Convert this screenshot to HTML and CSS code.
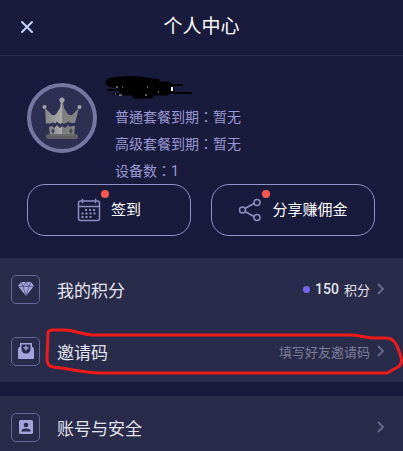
FILE: index.html
```html
<!DOCTYPE html>
<html lang="zh-CN">
<head>
    <meta charset="UTF-8">
    <meta name="viewport" content="width=device-width, initial-scale=1.0">
    <link rel="stylesheet" href="styles.css">
    <title>个人中心</title>
</head>
<body>

    <header class="header">
        <button type="button" class="close" aria-label="关闭">
            <svg width="14" height="14" viewBox="0 0 14 14"><path d="M2 2l10 10M12 2L2 12"/></svg>
        </button>
        <h1 class="title">个人中心</h1>
    </header>

    <section class="profile">
        <div class="avatar">
            <svg width="42" height="44" viewBox="0 0 42 44">
                <defs>
                    <linearGradient id="metal" x1="0" x2="1" y1="0" y2="0">
                        <stop offset="0" stop-color="#85868a"/>
                        <stop offset="0.49" stop-color="#a9aaa8"/>
                        <stop offset="0.52" stop-color="#7d7e80"/>
                        <stop offset="1" stop-color="#858688"/>
                    </linearGradient>
                </defs>
                <g fill="url(#metal)">
                    <path d="M4 12l7 7q4 1 6-4l2-3 1-6h2l1 6 2 3q2 5 6 4l7-7-4 15-3 1-2-2-2 3-3-2-3 3-3-3-3 2-3-3-2 3-3-2-2 1z"/>
                    <path d="M8 31l3-1 2 2 3-3 3 3 2-2 3 2 3-3 2 2 2-1 3 0-1 9H9z"/>
                </g>
                <g fill="#a3a4a6">
                    <circle cx="21" cy="4" r="2.6"/>
                    <circle cx="3.500" cy="11" r="2"/>
                    <circle cx="38.500" cy="11" r="2"/>
                </g>
                <path d="M8 29l3-1 2 2 3-3 3 3 2-2 3 2 3-3 2 2 2-1h3" fill="none" stroke="#2d3052" stroke-width="2"/>
                <path d="M12 32l2 3-2 3-2-3zM30 32l2 3-2 3-2-3z" fill="#4b4c57"/>
                <rect x="5" y="38" width="32" height="5" rx="2" fill="#5f6062"/>
                <path d="M9 39h24" stroke="#777873" stroke-width="1"/>
            </svg>
        </div>
        <div class="info">
            <!-- hidden nickname -->
            <svg class="nickname" width="88" height="24" viewBox="0 0 88 24">
                <g fill="none" stroke="#000" stroke-linecap="round" stroke-linejoin="round">
                    <path d="M4 5q-5 3 6 5M5 4q20-4 40 0" stroke-width="4"/>
                    <path d="M7 5h45M10 8h54M14 11h52M16 14h51M18 17h44M30 20h16" stroke-width="5"/>
                    <path d="M3 14h20M50 9h27M58 17h28M9 18h30" stroke-width="2"/>
                </g>
                <path d="M67 11v4" stroke="#fff" stroke-width="2"/>
                <path d="M11 11h2M17 11h1M42 11h1M10 18h1M14 19h3M40 19h2M53 16h1" stroke="#b9b9c4" stroke-width="1"/>
            </svg>
            <p>普通套餐到期：暂无</p>
            <p>高级套餐到期：暂无</p>
            <p>设备数：1</p>
        </div>
    </section>

    <div class="actions">
        <button type="button" class="action">
            <span class="action-icon">
                <svg width="24" height="24" viewBox="0 0 24 24">
                    <rect x="1.500" y="3" width="21" height="19.500" rx="2"/>
                    <path d="M2 8.500h20M5.500 0.800v4.500M18.500 0.800v4.500"/>
                    <path class="dots" d="M8 12h12M4.500 15.500h15.500M4.500 19h12"/>
                </svg>
                <span class="badge"></span>
            </span>
            签到
        </button>
        <button type="button" class="action">
            <span class="action-icon">
                <svg width="24" height="24" viewBox="0 0 24 24">
                    <path d="M6.800 10.500l9.200-5M6.800 13.500l9.200 5"/>
                    <circle cx="4.500" cy="12" r="3"/>
                    <circle cx="19" cy="4.500" r="3"/>
                    <circle cx="19" cy="19.500" r="3"/>
                </svg>
                <span class="badge"></span>
            </span>
            分享赚佣金
        </button>
    </div>

    <nav class="menu">
        <a href="#" class="row">
            <span class="row-icon">
                <svg width="18" height="16" viewBox="0 0 18 16">
                    <path d="M4 1h10l3 4-8 10L1 5z" fill="#a3a4dc"/>
                    <path d="M1 5.500h16M4 1l2 4.500L9 1l3 4.500L14 1M6 5.500L9 15l3-9.500" fill="none" stroke="#50517f" stroke-width="0.800"/>
                </svg>
            </span>
            <span class="label">我的积分</span>
            <span class="points"><b>150</b> 积分</span>
            <svg class="arrow" width="8" height="14" viewBox="0 0 8 14"><path d="M1 2l5 5-5 5"/></svg>
        </a>
        <a href="#" class="row">
            <span class="row-icon">
                <svg width="18" height="18" viewBox="0 0 18 18">
                    <path d="M3 1h12v4h1l1 2v9q0 1-1 1H2q-1 0-1-1V7l1-2h1z" fill="#a3a4dc"/>
                    <path d="M4.500 2.500h9V7.500Q13 11.500 9 11.500T4.500 7.500z" fill="#292b4d"/>
                    <path d="M9 3l1 1.800 2 .7-1.500 1.500L9 9 7.500 7 6 5.500l2-.7z" fill="#8f90c6"/>
                </svg>
            </span>
            <span class="label">邀请码</span>
            <span class="hint">填写好友邀请码</span>
            <svg class="arrow" width="8" height="14" viewBox="0 0 8 14"><path d="M1 2l5 5-5 5"/></svg>
            <!-- hand-drawn ring around the row -->
            <svg class="ring" viewBox="0 0 403 62" preserveAspectRatio="none">
                <path d="M48 13Q48 10 53 10H65C74 10 80 14 92 15H350C360 15 365 18 376 18H386C395 18 398 27 401 37Q403 44 398 47L387 53H98C82 52 70 49 53 47Q47 46 47 39Z"/>
            </svg>
        </a>
    </nav>

    <nav class="menu">
        <a href="#" class="row">
            <span class="row-icon">
                <svg width="14" height="14" viewBox="0 0 14 14">
                    <rect width="14" height="14" rx="1.500" fill="#a3a4dc"/>
                    <circle cx="7" cy="5" r="2.300" fill="#292b4d"/>
                    <path d="M2.500 11.500V10.500Q3 8.500 7 8.500T11.500 10.500V11.500z" fill="#292b4d"/>
                </svg>
            </span>
            <span class="label">账号与安全</span>
            <svg class="arrow" width="8" height="14" viewBox="0 0 8 14"><path d="M1 2l5 5-5 5"/></svg>
        </a>
    </nav>

</body>
</html>
```

FILE: styles.css
```css
* {
    box-sizing: border-box;
}

body {
    margin: 0;
    background-color: #191b3d;
    color: #e4e4ee;
    font-family: Roboto, "Noto Sans CJK SC", sans-serif;
}

button {
    padding: 0;
    background: none;
    border: none;
    color: inherit;
    font-family: inherit;
    cursor: pointer;
}

svg {
    display: block;
}

.header {
    display: grid;
    grid-template-columns: 40px 1fr 40px;
    align-items: center;
    height: 56px;
    padding-bottom: 2px;
    border-bottom: 1px solid #2a2b4d;
}

.close {
    padding-left: 20px;
}

.close path {
    fill: none;
    stroke: #c3d2f8;
    stroke-width: 2;
    stroke-linecap: round;
}

.title {
    margin: 0;
    text-align: center;
    font-size: 19px;
    font-weight: 400;
    line-height: 28px;
    color: #fff;
}

.profile {
    display: flex;
    gap: 18px;
    height: 128px;
    padding: 20px 27px 0;
}

.avatar {
    display: flex;
    align-items: center;
    justify-content: center;
    width: 70px;
    height: 70px;
    margin-top: 7px;
    border: 4px solid #7677a0;
    border-radius: 50%;
    background-color: #2d3052;
}

/* TC without locl keeps the fullwidth colon centred */
.info p {
    margin: 0;
    font-family: Roboto, "Noto Sans CJK TC", sans-serif;
    font-feature-settings: "locl" 0;
    font-size: 14px;
    line-height: 27px;
    color: #9a99d2;
}

.nickname {
    margin: 0 0 4px -10px;
}

.actions {
    display: flex;
    gap: 20px;
    padding: 0 28px 0 27px;
}

.action {
    flex: 1;
    display: flex;
    align-items: center;
    justify-content: center;
    gap: 10px;
    height: 52px;
    border: 1px solid #9191c8;
    border-radius: 18px;
    font-size: 15px;
    line-height: 22px;
    color: #fff;
}

.action-icon {
    position: relative;
}

.action-icon svg {
    fill: none;
    stroke: #8d8dc2;
    stroke-width: 1.5;
}

.action-icon .dots {
    stroke-width: 2;
    stroke-dasharray: 2 2;
}

.badge {
    position: absolute;
    top: -8px;
    right: -8px;
    width: 8px;
    height: 8px;
    border-radius: 50%;
    background-color: #fc5753;
}

.menu {
    margin-top: 14px;
    background-color: #292b4b;
}

.actions + .menu {
    margin-top: 22px;
}

.row {
    position: relative;
    display: flex;
    align-items: center;
    height: 62px;
    padding: 0 18px 0 11px;
    color: inherit;
    text-decoration: none;
}

.row-icon {
    display: flex;
    align-items: center;
    justify-content: center;
    width: 29px;
    height: 29px;
    border: 1px solid #66679a;
    border-radius: 5px;
}

.label {
    flex: 1;
    margin-left: 17px;
    font-size: 17px;
}

.points {
    display: flex;
    align-items: center;
    gap: 5px;
    font-size: 13px;
}

.points::before {
    content: "";
    width: 7px;
    height: 7px;
    border-radius: 50%;
    background-color: #7466ee;
}

.points b {
    font-size: 14px;
    font-weight: 500;
}

.hint {
    font-size: 13px;
    color: #7c7d98;
}

.arrow {
    margin-left: 7px;
}

.arrow path {
    fill: none;
    stroke: #65678a;
    stroke-width: 2;
}

.ring {
    position: absolute;
    top: 0;
    left: 0;
    width: 100%;
    height: 100%;
    overflow: visible;
    pointer-events: none;
}

.ring path {
    fill: none;
    stroke: #ee1b1b;
    stroke-width: 3;
    stroke-linejoin: round;
}
```
